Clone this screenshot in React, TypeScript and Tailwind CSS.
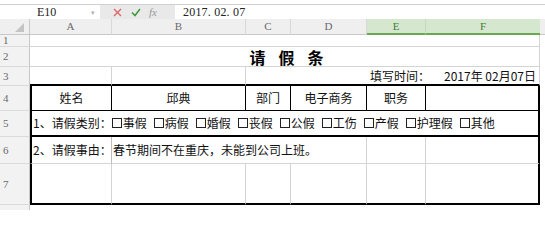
import React from "react";

function Box() {
  return <span className="inline-block w-[10px] h-[10px] border border-[#222] mr-[1px] align-[-1px]" />;
}

function RowHead({ n }: { n?: string }) {
  return (
    <div className="bg-[#f2f2f2] border-r border-r-[#c8c8c8] border-b border-b-[#dadada] flex items-center pl-[3px] text-[11px] text-[#6a6a6a] [font-family:'Liberation_Serif',serif]">
      {n}
    </div>
  );
}

function ColHead({ l, sel, last }: { l: string; sel?: boolean; last?: boolean }) {
  return sel ? (
    <div className={`bg-[#d6e7d0] border-b-2 border-b-[#6aa84f] ${last ? "" : "border-r border-r-[#c2d9bb]"} flex items-center justify-center text-[11px] text-[#3f7f35] [font-family:'Liberation_Serif',serif]`}>
      {l}
    </div>
  ) : (
    <div className="bg-[#efefef] border-r border-r-[#d8d8d8] border-b border-b-[#c8c8c8] flex items-center justify-center text-[11px] text-[#6a6a6a] [font-family:'Liberation_Serif',serif]">
      {l}
    </div>
  );
}

export default function App() {
  const items = ["事假", "病假", "婚假", "丧假", "公假", "工伤", "产假", "护理假", "其他"];
  return (
    <div className="w-[545px] h-[210px] bg-white overflow-hidden [font-family:'Noto_Sans_CJK_SC',sans-serif] text-[12px] text-[#111]">
      <div className="h-[4px] bg-white" />
      {/* formula bar */}
      <div className="h-[15px] border-t border-t-[#d0d0d0] flex items-stretch bg-white">
        <div className="w-[100px] flex items-center relative">
          <span className="ml-[37px] text-[12px] [font-family:'Liberation_Serif',serif] text-[#222]">E10</span>
          <span className="ml-auto mr-[5px] text-[7px] text-[#b0b0b0]">▾</span>
        </div>
        <div className="w-[75px] bg-[#e9e9e9] flex items-center">
          <svg width="9" height="9" viewBox="0 0 9 9" className="ml-[13px]">
            <path d="M1 1 L8 8 M8 1 L1 8" stroke="#e06666" strokeWidth="1.4" />
          </svg>
          <svg width="10" height="9" viewBox="0 0 10 9" className="ml-[9px]">
            <path d="M1 4.5 L4 7.5 L9 1" stroke="#3c9a3c" strokeWidth="1.5" fill="none" />
          </svg>
          <span className="ml-[8px] italic text-[11px] text-[#9a9a9a] [font-family:'Liberation_Serif',serif]">fx</span>
        </div>
        <div className="flex-1 flex items-center">
          <span className="ml-[8px] text-[12px] [font-family:'Liberation_Serif',serif] text-[#222] tracking-[0.2px]">2017. 02. 07</span>
        </div>
      </div>
      {/* sheet */}
      <div className="grid grid-cols-[30px_82px_134px_45px_76px_59px_114px_5px] grid-rows-[16px_12px_20px_19px_25px_26px_27px_41px_5px]">
        {/* header */}
        <div className="bg-[#efefef] border-r border-r-[#c8c8c8] border-b border-b-[#c8c8c8] relative">
          <svg width="9" height="9" viewBox="0 0 9 9" className="absolute right-[5px] bottom-[2px]">
            <path d="M9 0 L9 9 L0 9 Z" fill="#c4c4c4" />
          </svg>
        </div>
        <ColHead l="A" />
        <ColHead l="B" />
        <ColHead l="C" />
        <ColHead l="D" />
        <ColHead l="E" sel />
        <ColHead l="F" sel last />
        <div className="bg-[#efefef] border-b border-b-[#c8c8c8]" />

        {/* row 1 */}
        <RowHead n="1" />
        <div className="col-span-6 border-r border-b border-[#d4d4d4]" />
        <div />

        {/* row 2 */}
        <RowHead n="2" />
        <div className="col-span-6 border-r border-b border-[#d4d4d4] flex items-end justify-center gap-[13px] pb-[1px] pl-[4px] text-[16px] font-bold text-black leading-none">
          <span>请</span>
          <span>假</span>
          <span>条</span>
        </div>
        <div />

        {/* row 3 */}
        <RowHead n="3" />
        <div className="border-r border-r-[#d4d4d4] border-b-2 border-b-black" />
        <div className="border-r border-r-[#d4d4d4] border-b-2 border-b-black" />
        <div className="col-span-4 border-r border-r-[#d4d4d4] border-b-2 border-b-black flex items-center justify-end pr-[3px]">
          <span>填写时间：</span>
          <span className="ml-[14px]">2017年 02月07日</span>
        </div>
        <div />

        {/* row 4 */}
        <RowHead n="4" />
        <div className="border-l-2 border-l-black border-r border-r-black border-b border-b-black flex items-center justify-center">姓名</div>
        <div className="border-r border-r-black border-b border-b-black flex items-center justify-center">邱典</div>
        <div className="border-r border-r-black border-b border-b-black flex items-center justify-center">部门</div>
        <div className="border-r border-r-black border-b border-b-black flex items-center justify-center">电子商务</div>
        <div className="border-r border-r-black border-b border-b-black flex items-center justify-center">职务</div>
        <div className="border-r-2 border-r-black border-b border-b-black" />
        <div />

        {/* row 5 */}
        <RowHead n="5" />
        <div className="col-span-6 border-l-2 border-l-black border-r-2 border-r-black border-b-2 border-b-black flex items-center pl-[1px] whitespace-nowrap">
          <span>1、请假类别：</span>
          {items.map((t, i) => (
            <span key={t} className={`flex items-center ${i === 0 ? "" : "ml-[7px]"}`}>
              <Box />
              {t}
            </span>
          ))}
        </div>
        <div />

        {/* row 6 */}
        <RowHead n="6" />
        <div className="border-l-2 border-l-black border-r border-r-[#bdbdbd] border-b border-b-[#d4d4d4] flex items-center pl-[1px] whitespace-nowrap">2、请假事由：</div>
        <div className="col-span-3 border-r border-r-[#d4d4d4] border-b border-b-[#d4d4d4] flex items-center pl-[1px] whitespace-nowrap">春节期间不在重庆，未能到公司上班。</div>
        <div className="border-r border-r-[#d4d4d4] border-b border-b-[#d4d4d4]" />
        <div className="border-r-2 border-r-black border-b border-b-[#d4d4d4]" />
        <div />

        {/* row 7 */}
        <RowHead n="7" />
        <div className="border-l-2 border-l-black border-r border-r-[#d4d4d4] border-b-2 border-b-black" />
        <div className="border-r border-r-[#d4d4d4] border-b-2 border-b-black" />
        <div className="border-r border-r-[#d4d4d4] border-b-2 border-b-black" />
        <div className="border-r border-r-[#d4d4d4] border-b-2 border-b-black" />
        <div className="border-r border-r-[#d4d4d4] border-b-2 border-b-black" />
        <div className="border-r-2 border-r-black border-b-2 border-b-black" />
        <div />

        {/* row 8 partial */}
        <div className="bg-[#f2f2f2] border-r border-r-[#c8c8c8]" />
        <div className="col-span-7" />
      </div>
    </div>
  );
}
